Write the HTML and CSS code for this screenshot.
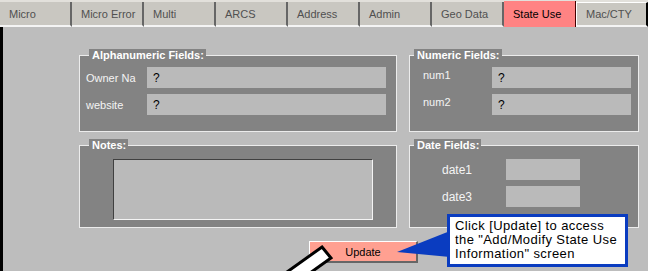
FILE: index.html
```html
<!DOCTYPE html>
<html lang="en">
<head>
  <meta charset="UTF-8" />
  <title>State Use</title>
  <link rel="stylesheet" href="styles.css">
</head>
<body>
  <div class="window">
    <nav class="tabs">
      <div class="tab">Micro</div>
      <div class="tab">Micro Error</div>
      <div class="tab">Multi</div>
      <div class="tab">ARCS</div>
      <div class="tab">Address</div>
      <div class="tab">Admin</div>
      <div class="tab">Geo Data</div>
      <div class="tab active">State Use</div>
      <div class="tab last">Mac/CTY</div>
    </nav>

    <main class="panel">
      <div class="groups">
        <fieldset class="group left alpha">
          <legend>Alphanumeric Fields:</legend>
          <div class="fields">
            <div class="row"><label>Owner Na</label><input type="text" value="?"></div>
            <div class="row"><label>website</label><input type="text" value="?"></div>
          </div>
        </fieldset>

        <fieldset class="group right numeric">
          <legend>Numeric Fields:</legend>
          <div class="fields">
            <div class="row"><label>num1</label><input type="text" value="?"></div>
            <div class="row"><label>num2</label><input type="text" value="?"></div>
          </div>
        </fieldset>

        <fieldset class="group left notes">
          <legend>Notes:</legend>
          <div class="fields">
            <textarea></textarea>
          </div>
        </fieldset>

        <fieldset class="group right dates">
          <legend>Date Fields:</legend>
          <div class="fields">
            <div class="row"><label>date1</label><input type="text" value=""></div>
            <div class="row"><label>date3</label><input type="text" value=""></div>
          </div>
        </fieldset>
      </div>

      <div class="actions">
        <button class="update">Update</button>
      </div>
    </main>

    <!-- callout pointer and mouse cursor drawn over the form -->
    <svg class="overlay" width="648" height="271" viewBox="0 0 648 271">
      <polygon points="397,252 450,231 450,257" fill="#0a3cc0" />
      <polygon points="322,247 331,258 296,283 287,272" fill="#fff" stroke="#000" stroke-width="3" />
    </svg>

    <div class="callout">
      Click [Update] to access<br>
      the "Add/Modify State Use<br>
      Information" screen
    </div>
  </div>
</body>
</html>
```

FILE: styles.css
```css
:root {
  --panel: #bdbdbd;
  --group: #838383;
  --field: #bababa;
  --tab: #c9c7c1;
}
body {
  margin: 0;
  background: var(--panel);
  font-family: 'Liberation Sans', Arial, sans-serif;
  font-size: 11px;
  overflow: hidden;
}
.window {
  position: relative;
  width: 648px;
  height: 271px;
}

/* tab strip */
.tabs {
  display: flex;
  height: 27px;
  padding-top: 2px;
  box-sizing: border-box;
  background: #e2e0db;
}
.tab {
  width: 72px;
  height: 25px;
  box-sizing: border-box;
  padding: 6px 0 0 9px;
  background: var(--tab);
  color: #505050;
  border-right: 2px solid #666;
  border-bottom: 2px solid #f4f4f4;
  white-space: nowrap;
}
.tab.active {
  background: #ff8383;
  color: #000;
  margin-top: -1px;
  height: 26px;
  padding-top: 7px;
  border-right: 1px solid #400;
  border-bottom: none;
}
.tab.last {
  border-left: 1px solid #fff;
  border-top: 1px solid #fff;
  border-right: 2px solid #000;
  padding-top: 5px;
}

/* main panel */
.panel {
  height: 244px;
  box-sizing: border-box;
  border-left: 3px solid #000;
  padding: 22px 0 0 76px;
  background: var(--panel);
}
.groups {
  display: grid;
  grid-template-columns: 318px 230px;
  grid-template-rows: 83px 89px;
  column-gap: 12px;
  row-gap: 7px;
}
.group {
  margin: 0;
  padding: 0;
  min-width: 0;
  box-sizing: border-box;
  border: 1px solid #ececec;
  background: var(--group);
}
.group legend {
  padding: 0 2px 0 3px;
  background: var(--group);
  color: #fff;
  font-weight: bold;
  line-height: 13px;
}
.group.left legend { margin-left: 9px; }
.group.right legend { margin-left: 4px; }

.fields {
  display: flex;
  flex-direction: column;
  gap: 6px;
}
.row {
  display: flex;
  align-items: center;
}
.row label {
  color: #f4f4f4;
  white-space: nowrap;
}
.row input {
  height: 21px;
  box-sizing: border-box;
  border: none;
  padding: 0 6px;
  background: var(--field);
  font-family: inherit;
  font-size: 12px;
  color: #000;
  outline: none;
}

.alpha .fields { padding: 5px 0 0 6px; }
.alpha label { width: 61px; }
.alpha input { width: 239px; }

.numeric .fields { padding: 5px 0 0 13px; }
.numeric .row { align-items: flex-start; }
.numeric label { width: 69px; padding-top: 2px; }
.numeric input { width: 139px; }

.dates .fields { padding: 7px 0 0 32px; }
.dates label { width: 64px; font-size: 12px; }
.dates input { width: 74px; }

.notes .fields { padding: 7px 0 0 33px; }
.notes textarea {
  width: 260px;
  height: 61px;
  box-sizing: border-box;
  margin: 0;
  resize: none;
  background: var(--field);
  border: 1px solid #404040;
  border-right-color: #f4f4f4;
  border-bottom-color: #f4f4f4;
}

.actions {
  margin-top: 13px;
  padding-left: 230px;
}
.update {
  width: 109px;
  height: 22px;
  padding: 0;
  background: #ffa091;
  border: 1px solid #fff;
  border-right: 2px solid #666;
  border-bottom: 2px solid #666;
  font-family: inherit;
  font-size: 11px;
  color: #000;
}

/* overlays */
.overlay {
  position: absolute;
  top: 0;
  left: 0;
  pointer-events: none;
}
.callout {
  position: absolute;
  left: 447px;
  top: 214px;
  width: 181px;
  height: 53px;
  box-sizing: border-box;
  padding: 2px 0 0 5px;
  border: 3px solid #0a3cc0;
  background: #fff;
  color: #000;
  font-size: 13px;
  letter-spacing: 0.4px;
  line-height: 14px;
  white-space: nowrap;
}
```
